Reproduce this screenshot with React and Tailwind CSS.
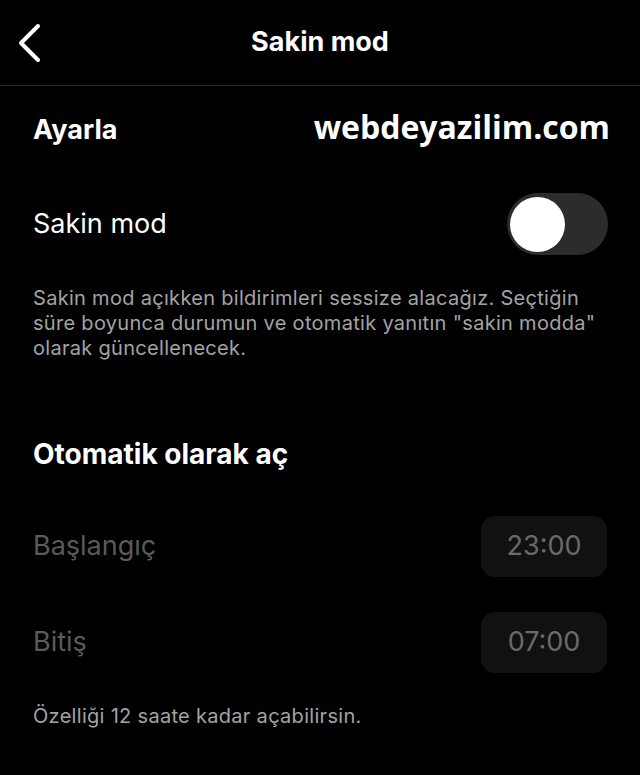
import React, { useState } from "react";

const font = { fontFamily: "Inter, 'Noto Sans', sans-serif" };

// saat kutusu (başlangıç / bitiş)
function TimeRow({ label, value }) {
  return (
    <div className="flex items-center justify-between h-[61px]">
      <span className="text-[27px] text-[#5a5a5a]">{label}</span>
      <div className="w-[126px] h-[61px] rounded-[14px] bg-[#111111] flex items-center justify-center text-[27px] text-[#6a6a6a]">
        {value}
      </div>
    </div>
  );
}

export default function App() {
  const [quiet, setQuiet] = useState(false);

  return (
    <div className="w-[640px] h-[775px] bg-black text-white overflow-hidden" style={font}>
      {/* üst bar */}
      <div className="relative h-[86px] flex items-center justify-center border-b border-[#2a2a2a]">
        <button className="absolute left-[16px] top-[23px]">
          <svg width="28" height="40" viewBox="0 0 28 40" fill="none">
            <path d="M22 3 L5 20 L22 37" stroke="white" strokeWidth="4" strokeLinecap="round" strokeLinejoin="round" />
          </svg>
        </button>
        <h1 className="text-[27px] font-bold">Sakin mod</h1>
      </div>

      <div className="px-[33px]">
        <div className="flex items-center justify-between h-[88px]">
          <h2 className="text-[27px] font-bold">Ayarla</h2>
          <span
            className="text-[32px] font-bold -mr-[3px] -mt-[6px]"
            style={{ fontFamily: "'Open Sans', sans-serif" }}
          >
            webdeyazilim.com
          </span>
        </div>

        <div className="flex items-center justify-between h-[62px] mt-[19px]">
          <span className="text-[27px]">Sakin mod</span>
          <button
            onClick={() => setQuiet(!quiet)}
            className="w-[101px] h-[62px] rounded-full bg-[#2c2c2e] flex items-center px-[3px] -mr-[1px]"
          >
            <span className={"w-[55px] h-[55px] rounded-full bg-white " + (quiet ? "ml-auto" : "")} />
          </button>
        </div>

        <p className="mt-[31px] text-[20px] leading-[25px] tracking-[0.3px] text-[#a3a3a3]">
          Sakin mod açıkken bildirimleri sessize alacağız. Seçtiğin süre boyunca durumun ve otomatik yanıtın "sakin modda" olarak güncellenecek.
        </p>

        <h2 className="mt-[76px] text-[28px] leading-[34px] font-bold">Otomatik olarak aç</h2>

        <div className="mt-[45px] flex flex-col gap-[35px]">
          <TimeRow label="Başlangıç" value="23:00" />
          <TimeRow label="Bitiş" value="07:00" />
        </div>

        <p className="mt-[31px] text-[20px] leading-[25px] tracking-[0.3px] text-[#a3a3a3]">
          Özelliği 12 saate kadar açabilirsin.
        </p>
      </div>
    </div>
  );
}
